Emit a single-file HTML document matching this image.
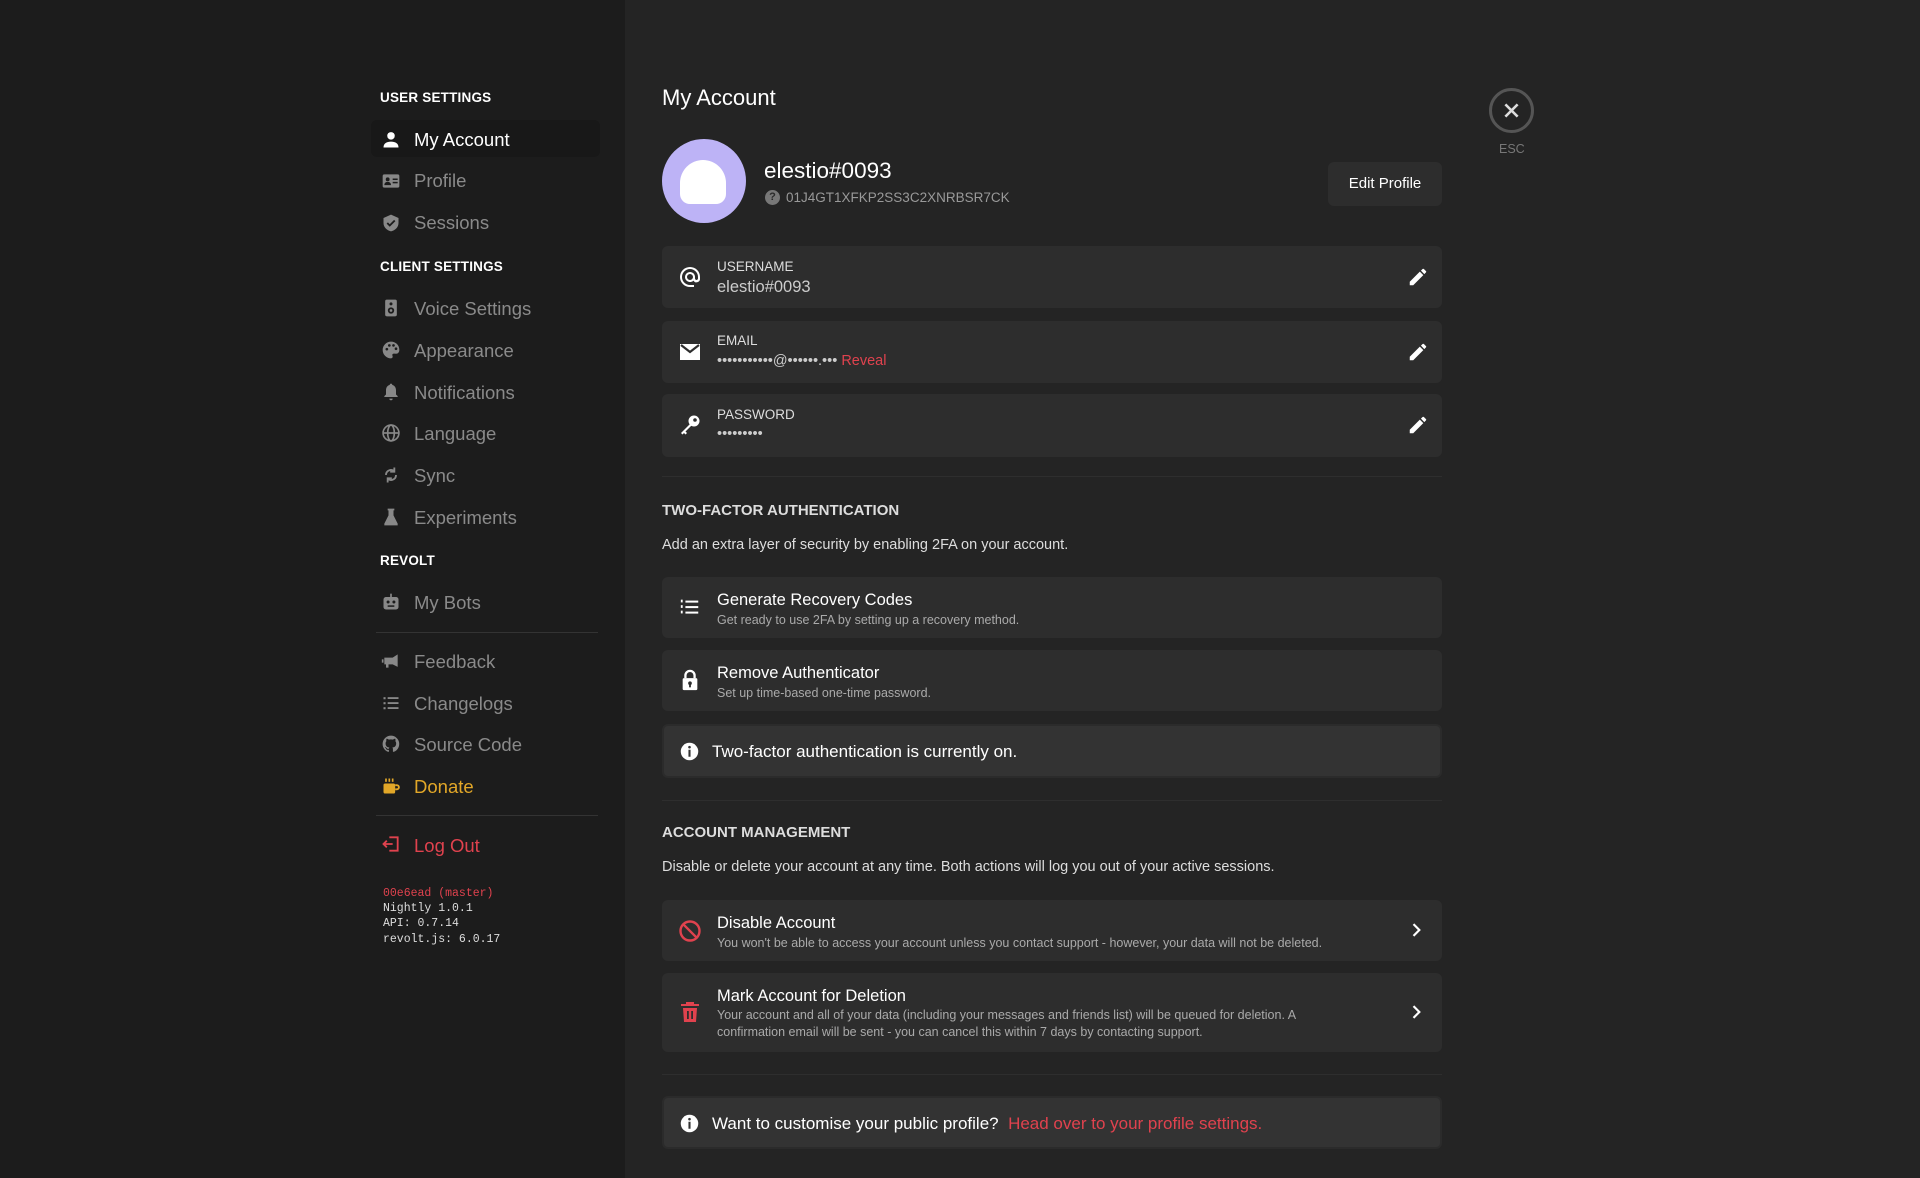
<!DOCTYPE html>
<html><head><meta charset="utf-8"><style>
*{margin:0;padding:0;box-sizing:border-box}
body{width:1920px;height:1178px;background:#242424;font-family:"Liberation Sans",sans-serif;position:relative;overflow:hidden;color:#fff}
.sb{position:absolute;left:0;top:0;width:625px;height:1178px;background:#1c1c1c}
.a{position:absolute;white-space:nowrap}
.hd{font-size:13.5px;font-weight:bold;color:#fff;left:380px;letter-spacing:.2px}
.it{left:414px;font-size:18.5px;color:#8a8a8a;line-height:24px}
.ic{position:absolute;left:381px;width:20px;height:20px}
.div{position:absolute;left:376px;width:222px;height:1px;background:#333}
.card{position:absolute;left:662px;width:780px;background:#2d2d2d;border-radius:6px}
.lbl{position:absolute;left:55px;font-size:13.5px;color:#ddd}
.val{position:absolute;left:55px;font-size:16.5px;color:#ccc}
.t{position:absolute;left:55px;font-size:16.5px;color:#fff}
.s{position:absolute;left:55px;font-size:12.5px;color:#aaa;line-height:17px}
.hr{position:absolute;left:662px;width:780px;height:1px;background:#2e2e2e}
.h2{position:absolute;left:662px;font-size:15px;font-weight:bold;color:#ddd}
.p{position:absolute;left:662px;font-size:14.5px;color:#ddd}
.info{position:absolute;left:662px;width:780px;background:#333;border:2px solid #2b2b2b;border-radius:6px}
svg{display:block}
</style></head><body>
<div class="sb"></div>

<div class="a hd" style="top:90px">USER SETTINGS</div>
<div class="a" style="left:371px;top:120px;width:229px;height:37px;background:#181818;border-radius:6px"></div>
<svg class="ic" style="top:130px" viewBox="0 0 24 24"><circle cx="12" cy="7" r="4.5" fill="#fff"/><path d="M3 21c0-5 4-7 9-7s9 2 9 7z" fill="#fff"/></svg>
<div class="a it" style="top:128px;color:#fff">My Account</div>
<svg class="ic" style="top:171px" viewBox="0 0 24 24"><rect x="2" y="4" width="20" height="16" rx="2" fill="#888"/><circle cx="8" cy="10" r="2.3" fill="#1c1c1c"/><path d="M4 17c0-3 2-4 4-4s4 1 4 4z" fill="#1c1c1c"/><rect x="14" y="9" width="6" height="1.8" fill="#1c1c1c"/><rect x="14" y="13" width="6" height="1.8" fill="#1c1c1c"/></svg>
<div class="a it" style="top:169px">Profile</div>
<svg class="ic" style="top:213px" viewBox="0 0 24 24"><path d="M12 2l9 4v6c0 5-4 9-9 10-5-1-9-5-9-10V6z" fill="#888"/><path d="M7.5 12l3 3 6-6" stroke="#1c1c1c" stroke-width="2.2" fill="none"/></svg>
<div class="a it" style="top:211px">Sessions</div>

<div class="a hd" style="top:259px">CLIENT SETTINGS</div>
<svg class="ic" style="top:298px" viewBox="0 0 24 24"><rect x="5" y="2" width="14" height="20" rx="2" fill="#888"/><circle cx="12" cy="7" r="1.8" fill="#1c1c1c"/><circle cx="12" cy="15" r="3.8" fill="#1c1c1c"/><circle cx="12" cy="15" r="1.6" fill="#888"/></svg>
<div class="a it" style="top:297px">Voice Settings</div>
<svg class="ic" style="top:340px" viewBox="0 0 24 24"><path d="M12 2a10 10 0 000 20c1.5 0 2-1 2-2 0-1.5-1-2 0-3s2-.5 4-.5c2.5 0 4-2 4-4.5C22 6 17.5 2 12 2z" fill="#888"/><circle cx="7" cy="11" r="1.6" fill="#1c1c1c"/><circle cx="10" cy="6.5" r="1.6" fill="#1c1c1c"/><circle cx="15" cy="6.5" r="1.6" fill="#1c1c1c"/><circle cx="18" cy="10.5" r="1.6" fill="#1c1c1c"/></svg>
<div class="a it" style="top:339px">Appearance</div>
<svg class="ic" style="top:382px" viewBox="0 0 24 24"><path d="M12 2c-1 0-1.5.7-1.5 1.5C7.5 4.3 6 7 6 10v5l-2 2v1h16v-1l-2-2v-5c0-3-1.5-5.7-4.5-6.5C13.5 2.7 13 2 12 2zM10 20a2 2 0 004 0z" fill="#888"/></svg>
<div class="a it" style="top:381px">Notifications</div>
<svg class="ic" style="top:423px" viewBox="0 0 24 24" fill="none" stroke="#888" stroke-width="2"><circle cx="12" cy="12" r="9.5"/><ellipse cx="12" cy="12" rx="4" ry="9.5"/><path d="M2.5 12h19"/></svg>
<div class="a it" style="top:422px">Language</div>
<svg class="ic" style="top:465px" viewBox="0 0 24 24" fill="none" stroke="#888" stroke-width="2.2"><path d="M6 12a6 6 0 0110-4.5M18 12a6 6 0 01-10 4.5"/><path d="M16 3v5h-5M8 21v-5h5" /></svg>
<div class="a it" style="top:464px">Sync</div>
<svg class="ic" style="top:507px" viewBox="0 0 24 24"><path d="M8 2h8v2h-1v6l5 10v2H4v-2l5-10V4H8z" fill="#888"/></svg>
<div class="a it" style="top:506px">Experiments</div>

<div class="a hd" style="top:553px">REVOLT</div>
<svg class="ic" style="top:592px" viewBox="0 0 24 24"><rect x="11" y="2" width="2" height="4" fill="#888"/><rect x="3" y="6" width="18" height="15" rx="3" fill="#888"/><circle cx="8.5" cy="12" r="1.8" fill="#1c1c1c"/><circle cx="15.5" cy="12" r="1.8" fill="#1c1c1c"/><rect x="8" y="16" width="8" height="1.8" fill="#1c1c1c"/></svg>
<div class="a it" style="top:591px">My Bots</div>
<div class="div" style="top:632px"></div>
<svg class="ic" style="top:651px" viewBox="0 0 24 24"><path d="M20 4v15l-6-3H9v4H6v-4H4V8h10z" fill="#888"/><rect x="1" y="10" width="2" height="4" fill="#888"/></svg>
<div class="a it" style="top:650px">Feedback</div>
<svg class="ic" style="top:693px" viewBox="0 0 24 24" fill="#888"><rect x="3" y="5" width="2.5" height="2.5"/><rect x="3" y="11" width="2.5" height="2.5"/><rect x="3" y="17" width="2.5" height="2.5"/><rect x="8" y="5" width="13" height="2.2"/><rect x="8" y="11" width="13" height="2.2"/><rect x="8" y="17" width="13" height="2.2"/></svg>
<div class="a it" style="top:692px">Changelogs</div>
<svg class="ic" style="top:734px" viewBox="0 0 24 24"><path d="M12 2a10 10 0 00-3.2 19.5c.5 0 .7-.2.7-.5v-2c-2.8.6-3.4-1.2-3.4-1.2-.5-1.2-1.1-1.5-1.1-1.5-.9-.6.1-.6.1-.6 1 .1 1.5 1 1.5 1 .9 1.5 2.3 1.1 2.9.8.1-.6.3-1.1.6-1.3-2.2-.3-4.6-1.1-4.6-5 0-1.1.4-2 1-2.7-.1-.3-.4-1.3.1-2.7 0 0 .8-.3 2.8 1a9.5 9.5 0 015 0c1.9-1.3 2.7-1 2.7-1 .6 1.4.2 2.4.1 2.7.6.7 1 1.6 1 2.7 0 3.9-2.3 4.7-4.6 5 .4.3.7.9.7 1.9V21c0 .3.2.6.7.5A10 10 0 0012 2z" fill="#888"/></svg>
<div class="a it" style="top:733px">Source Code</div>
<svg class="ic" style="top:776px" viewBox="0 0 24 24"><rect x="3" y="9" width="14" height="12" rx="2" fill="#e2a728"/><path d="M17 11h2a2.5 2.5 0 010 5h-2" stroke="#e2a728" stroke-width="2.2" fill="none"/><rect x="5" y="3" width="2" height="4" fill="#e2a728"/><rect x="9" y="3" width="2" height="4" fill="#e2a728"/><rect x="13" y="3" width="2" height="4" fill="#e2a728"/></svg>
<div class="a it" style="top:775px;color:#e2a728">Donate</div>
<div class="div" style="top:815px"></div>
<svg class="ic" style="top:834px" viewBox="0 0 24 24" fill="none" stroke="#e0424e" stroke-width="2.2"><path d="M10 4h10v16H10"/><path d="M14 12H3M7 8l-4 4 4 4"/></svg>
<div class="a it" style="top:834px;color:#e0424e">Log Out</div>
<div class="a" style="left:383px;top:886px;font-family:'Liberation Mono',monospace;font-size:11.5px;line-height:15.2px;color:#ddd">
<div style="color:#e0424e">00e6ead (master)</div><div>Nightly 1.0.1</div><div>API: 0.7.14</div><div>revolt.js: 6.0.17</div></div>

<!-- main -->
<div class="a" style="left:662px;top:85px;font-size:22px;color:#fff">My Account</div>
<div class="a" style="left:1489px;top:88px;width:45px;height:45px;border:3px solid #555;border-radius:50%"></div>
<svg class="a" style="left:1501px;top:100px" width="21" height="21" viewBox="0 0 24 24" stroke="#ddd" stroke-width="3"><path d="M5 5l14 14M19 5L5 19"/></svg>
<div class="a" style="left:1499px;top:142px;font-size:12.5px;color:#777">ESC</div>

<div class="a" style="left:662px;top:139px;width:84px;height:84px;border-radius:50%;background:#bdb3f6"></div>
<div class="a" style="left:680px;top:160px;width:46px;height:44px;background:#fff;border-radius:23px 23px 10px 10px"></div>
<div class="a" style="left:764px;top:158px;font-size:22.5px;color:#fff">elestio#0093</div>
<div class="a" style="left:765px;top:190px;width:15px;height:15px;border-radius:50%;background:#777;color:#2a2a2a;font-size:11px;font-weight:bold;text-align:center;line-height:15px">?</div>
<div class="a" style="left:786px;top:190px;font-size:13.5px;color:#999">01J4GT1XFKP2SS3C2XNRBSR7CK</div>
<div class="a" style="left:1328px;top:162px;width:114px;height:44px;background:#2d2d2d;border-radius:6px;font-size:15px;color:#fff;text-align:center;line-height:44px">Edit Profile</div>

<div class="card" style="top:246px;height:62px">
<svg class="a" style="left:16px;top:19px" width="24" height="24" viewBox="0 0 24 24"><path d="M12 2a10 10 0 100 20h4v-2h-4a8 8 0 118-8v1.4c0 .8-.7 1.6-1.5 1.6S17 14.2 17 13.4V12a5 5 0 10-1.5 3.6 3.5 3.5 0 006.5-2.2V12A10 10 0 0012 2zm0 13a3 3 0 110-6 3 3 0 010 6z" fill="#fff"/></svg>
<div class="lbl" style="top:13px">USERNAME</div><div class="val" style="top:32px">elestio#0093</div>
<svg class="a" style="left:745px;top:20px" width="22" height="22" viewBox="0 0 24 24"><path d="M3 17.2V21h3.8L17.8 10 14 6.2zM20.7 7a1 1 0 000-1.4l-2.3-2.3a1 1 0 00-1.4 0l-1.8 1.8 3.7 3.7z" fill="#fff"/></svg>
</div>
<div class="card" style="top:321px;height:62px">
<svg class="a" style="left:16px;top:19px" width="24" height="24" viewBox="0 0 24 24"><path d="M2 4h20v16H2z" fill="#fff"/><path d="M3 5l9 7 9-7" stroke="#2d2d2d" stroke-width="2.2" fill="none"/></svg>
<div class="lbl" style="top:12px">EMAIL</div><div class="val" style="top:32px;font-size:14.5px">•••••••••••@••••••.••• <span style="color:#e0424e">Reveal</span></div>
<svg class="a" style="left:745px;top:20px" width="22" height="22" viewBox="0 0 24 24"><path d="M3 17.2V21h3.8L17.8 10 14 6.2zM20.7 7a1 1 0 000-1.4l-2.3-2.3a1 1 0 00-1.4 0l-1.8 1.8 3.7 3.7z" fill="#fff"/></svg>
</div>
<div class="card" style="top:394px;height:63px">
<svg class="a" style="left:16px;top:19px" width="24" height="24" viewBox="0 0 24 24"><circle cx="16" cy="8" r="5.5" fill="#fff"/><circle cx="17" cy="7" r="1.8" fill="#2d2d2d"/><path d="M12 11L3 20l1.5 1.5L6 20l1.5 1.5L9 20l-1.5-1.5L13.5 12.5z" fill="#fff"/></svg>
<div class="lbl" style="top:13px">PASSWORD</div><div class="val" style="top:32px;font-size:14.5px">•••••••••</div>
<svg class="a" style="left:745px;top:20px" width="22" height="22" viewBox="0 0 24 24"><path d="M3 17.2V21h3.8L17.8 10 14 6.2zM20.7 7a1 1 0 000-1.4l-2.3-2.3a1 1 0 00-1.4 0l-1.8 1.8 3.7 3.7z" fill="#fff"/></svg>
</div>

<div class="hr" style="top:476px"></div>
<div class="h2" style="top:502px">TWO-FACTOR AUTHENTICATION</div>
<div class="p" style="top:537px">Add an extra layer of security by enabling 2FA on your account.</div>
<div class="card" style="top:577px;height:61px">
<svg class="a" style="left:17px;top:19px" width="22" height="22" viewBox="0 0 24 24" fill="#fff"><rect x="2" y="4" width="2" height="3"/><rect x="2" y="10" width="2" height="3"/><rect x="2" y="16" width="2" height="3"/><rect x="7" y="5" width="14" height="2.2"/><rect x="7" y="11" width="14" height="2.2"/><rect x="7" y="17" width="14" height="2.2"/></svg>
<div class="t" style="top:14px">Generate Recovery Codes</div><div class="s" style="top:35px">Get ready to use 2FA by setting up a recovery method.</div>
</div>
<div class="card" style="top:650px;height:61px">
<svg class="a" style="left:17px;top:18px" width="22" height="24" viewBox="0 0 24 24"><path d="M7 10V7a5 5 0 0110 0v3" stroke="#fff" stroke-width="2.5" fill="none"/><rect x="4" y="10" width="16" height="13" rx="1.5" fill="#fff"/><circle cx="12" cy="15.5" r="2" fill="#2d2d2d"/><rect x="11" y="16" width="2" height="4" fill="#2d2d2d"/></svg>
<div class="t" style="top:14px">Remove Authenticator</div><div class="s" style="top:35px">Set up time-based one-time password.</div>
</div>
<div class="info" style="top:724px;height:54px">
<svg class="a" style="left:15px;top:15px" width="21" height="21" viewBox="0 0 24 24"><circle cx="12" cy="12" r="10" fill="#fff"/><rect x="10.8" y="10" width="2.4" height="8" fill="#333"/><circle cx="12" cy="7" r="1.5" fill="#333"/></svg>
<div class="a" style="left:48px;top:16px;font-size:17px;color:#fff">Two-factor authentication is currently on.</div>
</div>

<div class="hr" style="top:800px"></div>
<div class="h2" style="top:824px">ACCOUNT MANAGEMENT</div>
<div class="p" style="top:859px">Disable or delete your account at any time. Both actions will log you out of your active sessions.</div>
<div class="card" style="top:900px;height:61px">
<svg class="a" style="left:16px;top:19px" width="24" height="24" viewBox="0 0 24 24" fill="none" stroke="#e0424e" stroke-width="2.4"><circle cx="12" cy="12" r="9.5"/><path d="M5.3 5.3l13.4 13.4"/></svg>
<div class="t" style="top:14px">Disable Account</div><div class="s" style="top:35px">You won't be able to access your account unless you contact support - however, your data will not be deleted.</div>
<svg class="a" style="left:744px;top:20px" width="20" height="20" viewBox="0 0 24 24" fill="none" stroke="#fff" stroke-width="2.6"><path d="M9 5l7 7-7 7"/></svg>
</div>
<div class="card" style="top:973px;height:79px">
<svg class="a" style="left:16px;top:27px" width="24" height="24" viewBox="0 0 24 24"><path d="M8 2h8v2h5v2H3V4h5z" fill="#e0424e"/><path d="M5 8h14l-1 14H6z" fill="#e0424e"/><rect x="9" y="11" width="1.8" height="8" fill="#2d2d2d"/><rect x="13.2" y="11" width="1.8" height="8" fill="#2d2d2d"/></svg>
<div class="t" style="top:14px">Mark Account for Deletion</div><div class="s" style="top:34px;white-space:normal;width:640px">Your account and all of your data (including your messages and friends list) will be queued for deletion. A confirmation email will be sent - you can cancel this within 7 days by contacting support.</div>
<svg class="a" style="left:744px;top:29px" width="20" height="20" viewBox="0 0 24 24" fill="none" stroke="#fff" stroke-width="2.6"><path d="M9 5l7 7-7 7"/></svg>
</div>

<div class="hr" style="top:1074px"></div>
<div class="info" style="top:1096px;height:53px">
<svg class="a" style="left:15px;top:15px" width="21" height="21" viewBox="0 0 24 24"><circle cx="12" cy="12" r="10" fill="#fff"/><rect x="10.8" y="10" width="2.4" height="8" fill="#333"/><circle cx="12" cy="7" r="1.5" fill="#333"/></svg>
<div class="a" style="left:48px;top:16px;font-size:17px;color:#fff">Want to customise your public profile? &nbsp;<span style="color:#e0424e">Head over to your profile settings.</span></div>
</div>
</body></html>
